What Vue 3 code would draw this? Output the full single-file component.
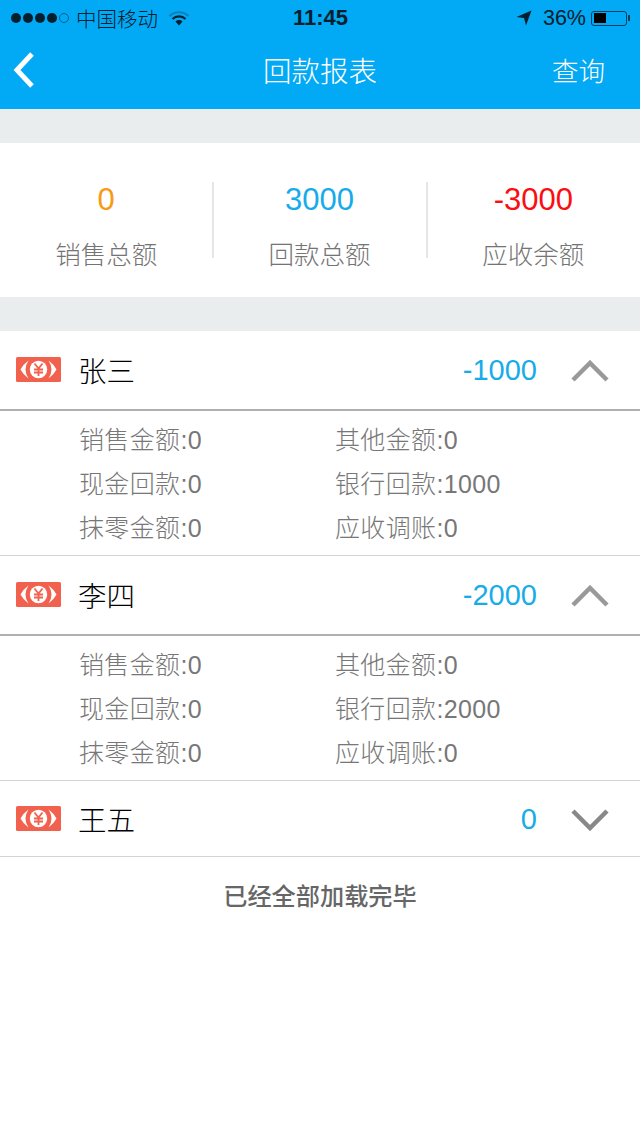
<script setup>
const summary = [
  { value: '0', label: '销售总额', tone: 'orange' },
  { value: '3000', label: '回款总额', tone: 'blue' },
  { value: '-3000', label: '应收余额', tone: 'red' },
]
const people = [
  { name: '张三', total: '-1000', open: true, details: ['销售金额:0', '其他金额:0', '现金回款:0', '银行回款:1000', '抹零金额:0', '应收调账:0'] },
  { name: '李四', total: '-2000', open: true, details: ['销售金额:0', '其他金额:0', '现金回款:0', '银行回款:2000', '抹零金额:0', '应收调账:0'] },
  { name: '王五', total: '0', open: false, details: [] },
]
</script>

<template>
  <div class="page">
    <header class="top">
      <div class="status">
        <div class="status-left">
          <span class="dots"><i v-for="n in 4" :key="n" class="dot"></i><i class="dot empty"></i></span>
          <span class="carrier">中国移动</span>
          <svg class="wifi" width="20" height="15" viewBox="0 0 20 15">
            <path d="M0.5 5 A14 14 0 0 1 19.5 5" fill="none" stroke="#0a7fb8" stroke-width="2"/>
            <path d="M3.5 8 A9.5 9.5 0 0 1 16.5 8" fill="none" stroke="#04202f" stroke-width="2.2"/>
            <path d="M6.5 10.5 A5 5 0 0 1 13.5 10.5 L10 14.5 Z" fill="#04202f"/>
          </svg>
        </div>
        <span class="time">11:45</span>
        <div class="status-right">
          <svg class="arrow" width="16" height="16" viewBox="0 0 16 16"><path d="M15.5 0.5 L0.5 7 L8 8 L10 15.5 Z" fill="#04202f"/></svg>
          <span class="pct">36%</span>
          <span class="battery"><span class="charge"></span></span>
          <span class="nub"></span>
        </div>
      </div>
      <nav class="nav">
        <svg class="back" width="24" height="38" viewBox="0 0 24 38"><path d="M20 3 L5 19 L20 35" fill="none" stroke="#fff" stroke-width="5"/></svg>
        <span class="title">回款报表</span>
        <span class="query">查询</span>
      </nav>
    </header>

    <section class="summary">
      <div v-for="s in summary" :key="s.label" class="cell">
        <span class="value" :class="s.tone">{{ s.value }}</span>
        <span class="label">{{ s.label }}</span>
      </div>
    </section>

    <section class="list">
      <article v-for="p in people" :key="p.name" class="person" :class="{ open: p.open }">
        <div class="row">
          <svg class="money" width="45" height="25" viewBox="0 0 45 25">
            <rect width="45" height="25" rx="1.5" fill="#f2614d"/>
            <circle cx="22.5" cy="12.5" r="8.7" fill="#fff"/>
            <path d="M12.5 3.5 Q7 7.5 4.5 12.5 Q7 17.5 12.5 21.5 Q9.5 17 9.5 12.5 Q9.5 8 12.5 3.5 Z" fill="#fff"/>
            <path d="M32.5 3.5 Q38 7.5 40.5 12.5 Q38 17.5 32.5 21.5 Q35.5 17 35.5 12.5 Q35.5 8 32.5 3.5 Z" fill="#fff"/>
            <path d="M18.5 6.5 L22.5 11.5 L26.5 6.5 M22.5 11.5 V19 M18 12.5 H27 M18 15.5 H27" fill="none" stroke="#f2614d" stroke-width="1.8"/>
          </svg>
          <span class="name">{{ p.name }}</span>
          <span class="total">{{ p.total }}</span>
          <svg class="chev" width="38" height="22" viewBox="0 0 38 22">
            <path v-if="p.open" d="M2 20 L19 3 L36 20" fill="none" stroke="#999" stroke-width="4.5"/>
            <path v-else d="M2 2 L19 19 L36 2" fill="none" stroke="#888" stroke-width="4.5"/>
          </svg>
        </div>
        <div v-if="p.open" class="details">
          <span v-for="d in p.details" :key="d" class="detail">{{ d }}</span>
        </div>
      </article>
    </section>

    <p class="done">已经全部加载完毕</p>
  </div>
</template>

<style>
html, body { margin: 0; background: #fff; }
</style>

<style scoped>
.page {
  width: 640px;
  height: 1138px;
  overflow: hidden;
  background: #fff;
  font-family: "Liberation Sans", "Noto Sans CJK SC", sans-serif;
}
.top { height: 109px; background: #02a9f4; display: flex; flex-direction: column; }
.status {
  height: 36px;
  display: grid;
  grid-template-columns: 1fr auto 1fr;
  align-items: center;
  padding: 0 10px 0 11px;
  color: #04202f;
}
.status-left, .status-right { display: flex; align-items: center; }
.status-right { justify-content: flex-end; }
.dots { display: flex; gap: 2px; margin-right: 7px; }
.dot { width: 10px; height: 10px; border-radius: 50%; background: #04202f; box-sizing: border-box; }
.dot.empty { background: transparent; border: 1px solid #0a5f8c; }
.carrier { font-size: 20.5px; font-weight: 300; }
.wifi { margin-left: 11px; }
.time { font-size: 22px; font-weight: 700; }
.arrow { margin-right: 11px; }
.pct { font-size: 21.5px; margin-right: 5px; }
.battery {
  display: block;
  width: 31px;
  height: 10px;
  border: 1.5px solid #04405f;
  border-radius: 3px;
  padding: 1.5px;
}
.charge { display: block; width: 12px; height: 100%; background: #000; }
.nub { width: 2px; height: 6px; background: #04405f; margin-left: 1px; }
.nav { flex: 1; position: relative; display: flex; align-items: center; justify-content: center; padding-bottom: 6px; color: #fff; }
.back { position: absolute; left: 12px; top: 15px; }
.title { font-size: 28.5px; font-weight: 300; }
.query { position: absolute; right: 35px; top: 14px; font-size: 26.5px; font-weight: 300; }

.summary {
  height: 154px;
  border-top: 34px solid #e9eded;
  border-bottom: 34px solid #e9eded;
  display: grid;
  grid-template-columns: repeat(3, 1fr);
  align-items: start;
}
.cell {
  position: relative;
  display: flex;
  flex-direction: column;
  align-items: center;
  padding-top: 39px;
}
.cell:last-child { padding-left: 1px; }
.cell + .cell::before {
  content: "";
  position: absolute;
  left: -1px;
  top: 39px;
  width: 2px;
  height: 76px;
  background: #e4e6e6;
}
.value { margin-left: -1px; font-size: 31px; line-height: 36px; }
.orange { color: #f89a14; }
.blue { color: #17ace9; }
.red { color: #fb0d10; }
.label { margin-top: 18px; margin-left: -1px; font-size: 25.5px; line-height: 38px; color: #747474; font-weight: 300; }

.person { border-bottom: 1px solid #d4d4d4; }
.row { display: flex; align-items: center; padding: 0 31px 0 16px; box-sizing: border-box; }
.person.open .row { border-bottom: 2px solid #b0b0b0; height: 80px; }
.person:not(.open) .row { height: 75px; padding-top: 1px; }
.money { flex: none; margin-right: 18px; margin-bottom: 1px; }
.name { font-size: 28.5px; font-weight: 300; color: #000; margin-bottom: 2px; margin-left: -1px; }
.total { margin-left: auto; margin-top: 1px; font-size: 29px; color: #17ace9; }
.chev { margin-left: 34px; margin-top: 1px; }
.details {
  display: grid;
  grid-template-columns: 256px 1fr;
  grid-auto-rows: 44px;
  align-items: center;
  padding: 5px 0 7px 79px;
  height: 132px;
}
.detail { font-size: 25px; letter-spacing: 0.35px; color: #777; font-weight: 300; white-space: nowrap; }
.done {
  margin: 23px 0 0;
  text-align: center;
  font-size: 24.2px;
  font-weight: 500;
  line-height: 34px;
  color: #666;
}
</style>
